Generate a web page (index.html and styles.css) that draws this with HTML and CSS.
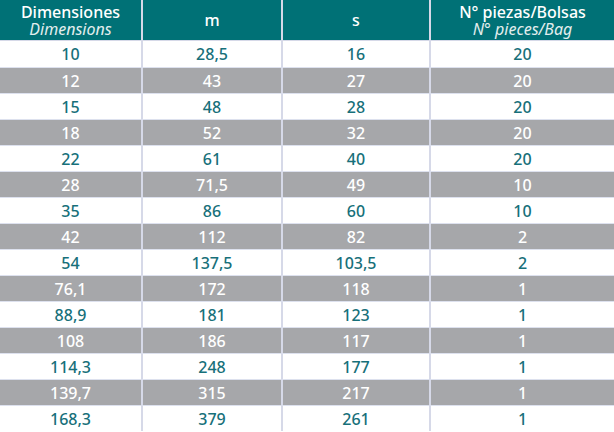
FILE: index.html
```html
<!DOCTYPE html>
<html lang="es">
<head>
<meta charset="utf-8">
<link rel="stylesheet" href="styles.css">
</head>
<body>
<table class="spec">
  <colgroup>
    <col class="c1"><col class="c2"><col class="c3"><col class="c4">
  </colgroup>
  <thead>
    <tr>
      <th><span class="l1">Dimensiones</span><span class="l2">Dimensions</span></th>
      <th>m</th>
      <th>s</th>
      <th><span class="l1">N° piezas/Bolsas</span><span class="l2">N° pieces/Bag</span></th>
    </tr>
  </thead>
  <tbody>
    <tr><td>10</td><td>28,5</td><td>16</td><td>20</td></tr>
    <tr class="alt"><td>12</td><td>43</td><td>27</td><td>20</td></tr>
    <tr><td>15</td><td>48</td><td>28</td><td>20</td></tr>
    <tr class="alt"><td>18</td><td>52</td><td>32</td><td>20</td></tr>
    <tr><td>22</td><td>61</td><td>40</td><td>20</td></tr>
    <tr class="alt"><td>28</td><td>71,5</td><td>49</td><td>10</td></tr>
    <tr><td>35</td><td>86</td><td>60</td><td>10</td></tr>
    <tr class="alt"><td>42</td><td>112</td><td>82</td><td>2</td></tr>
    <tr><td>54</td><td>137,5</td><td>103,5</td><td>2</td></tr>
    <tr class="alt"><td>76,1</td><td>172</td><td>118</td><td>1</td></tr>
    <tr><td>88,9</td><td>181</td><td>123</td><td>1</td></tr>
    <tr class="alt"><td>108</td><td>186</td><td>117</td><td>1</td></tr>
    <tr><td>114,3</td><td>248</td><td>177</td><td>1</td></tr>
    <tr class="alt"><td>139,7</td><td>315</td><td>217</td><td>1</td></tr>
    <tr><td>168,3</td><td>379</td><td>261</td><td>1</td></tr>
  </tbody>
</table>
</body>
</html>
```
FILE: styles.css
```css
html, body {
  margin: 0;
  padding: 0;
  background: #ffffff;
}
.spec {
  width: 614px;
  table-layout: fixed;
  border-collapse: separate;
  border-spacing: 0;
  font-family: "Noto Sans", "Open Sans", sans-serif;
}
.c1 { width: 141px; }
.c2 { width: 140px; }
.c3 { width: 148px; }
.c4 { width: 185px; }
.spec th,
.spec td {
  padding: 0;
  text-align: center;
  border-left: 2px solid #d6d9e8;
}
.spec th:first-child,
.spec td:first-child {
  border-left: none;
}
.spec th {
  height: 41px;
  background: #007176;
  color: #ffffff;
  font-weight: 500;
  font-size: 16px;
  line-height: 17px;
  padding-top: 1px;
  border-bottom: 1px solid #d6d9e8;
  box-sizing: border-box;
}
.spec th .l1,
.spec th .l2 {
  display: block;
}
.spec th .l2 {
  font-style: italic;
  font-weight: 400;
  color: #e3eeee;
}
.spec td {
  height: 26px;
  box-sizing: border-box;
  font-size: 16px;
  font-weight: 500;
  color: #17707a;
  border-top: 1px solid #dde1ee;
  line-height: 24px;
}
.spec tbody tr:first-child td {
  border-top: none;
}
.spec tr.alt td {
  background: #a6a7aa;
  color: #ffffff;
}
```
